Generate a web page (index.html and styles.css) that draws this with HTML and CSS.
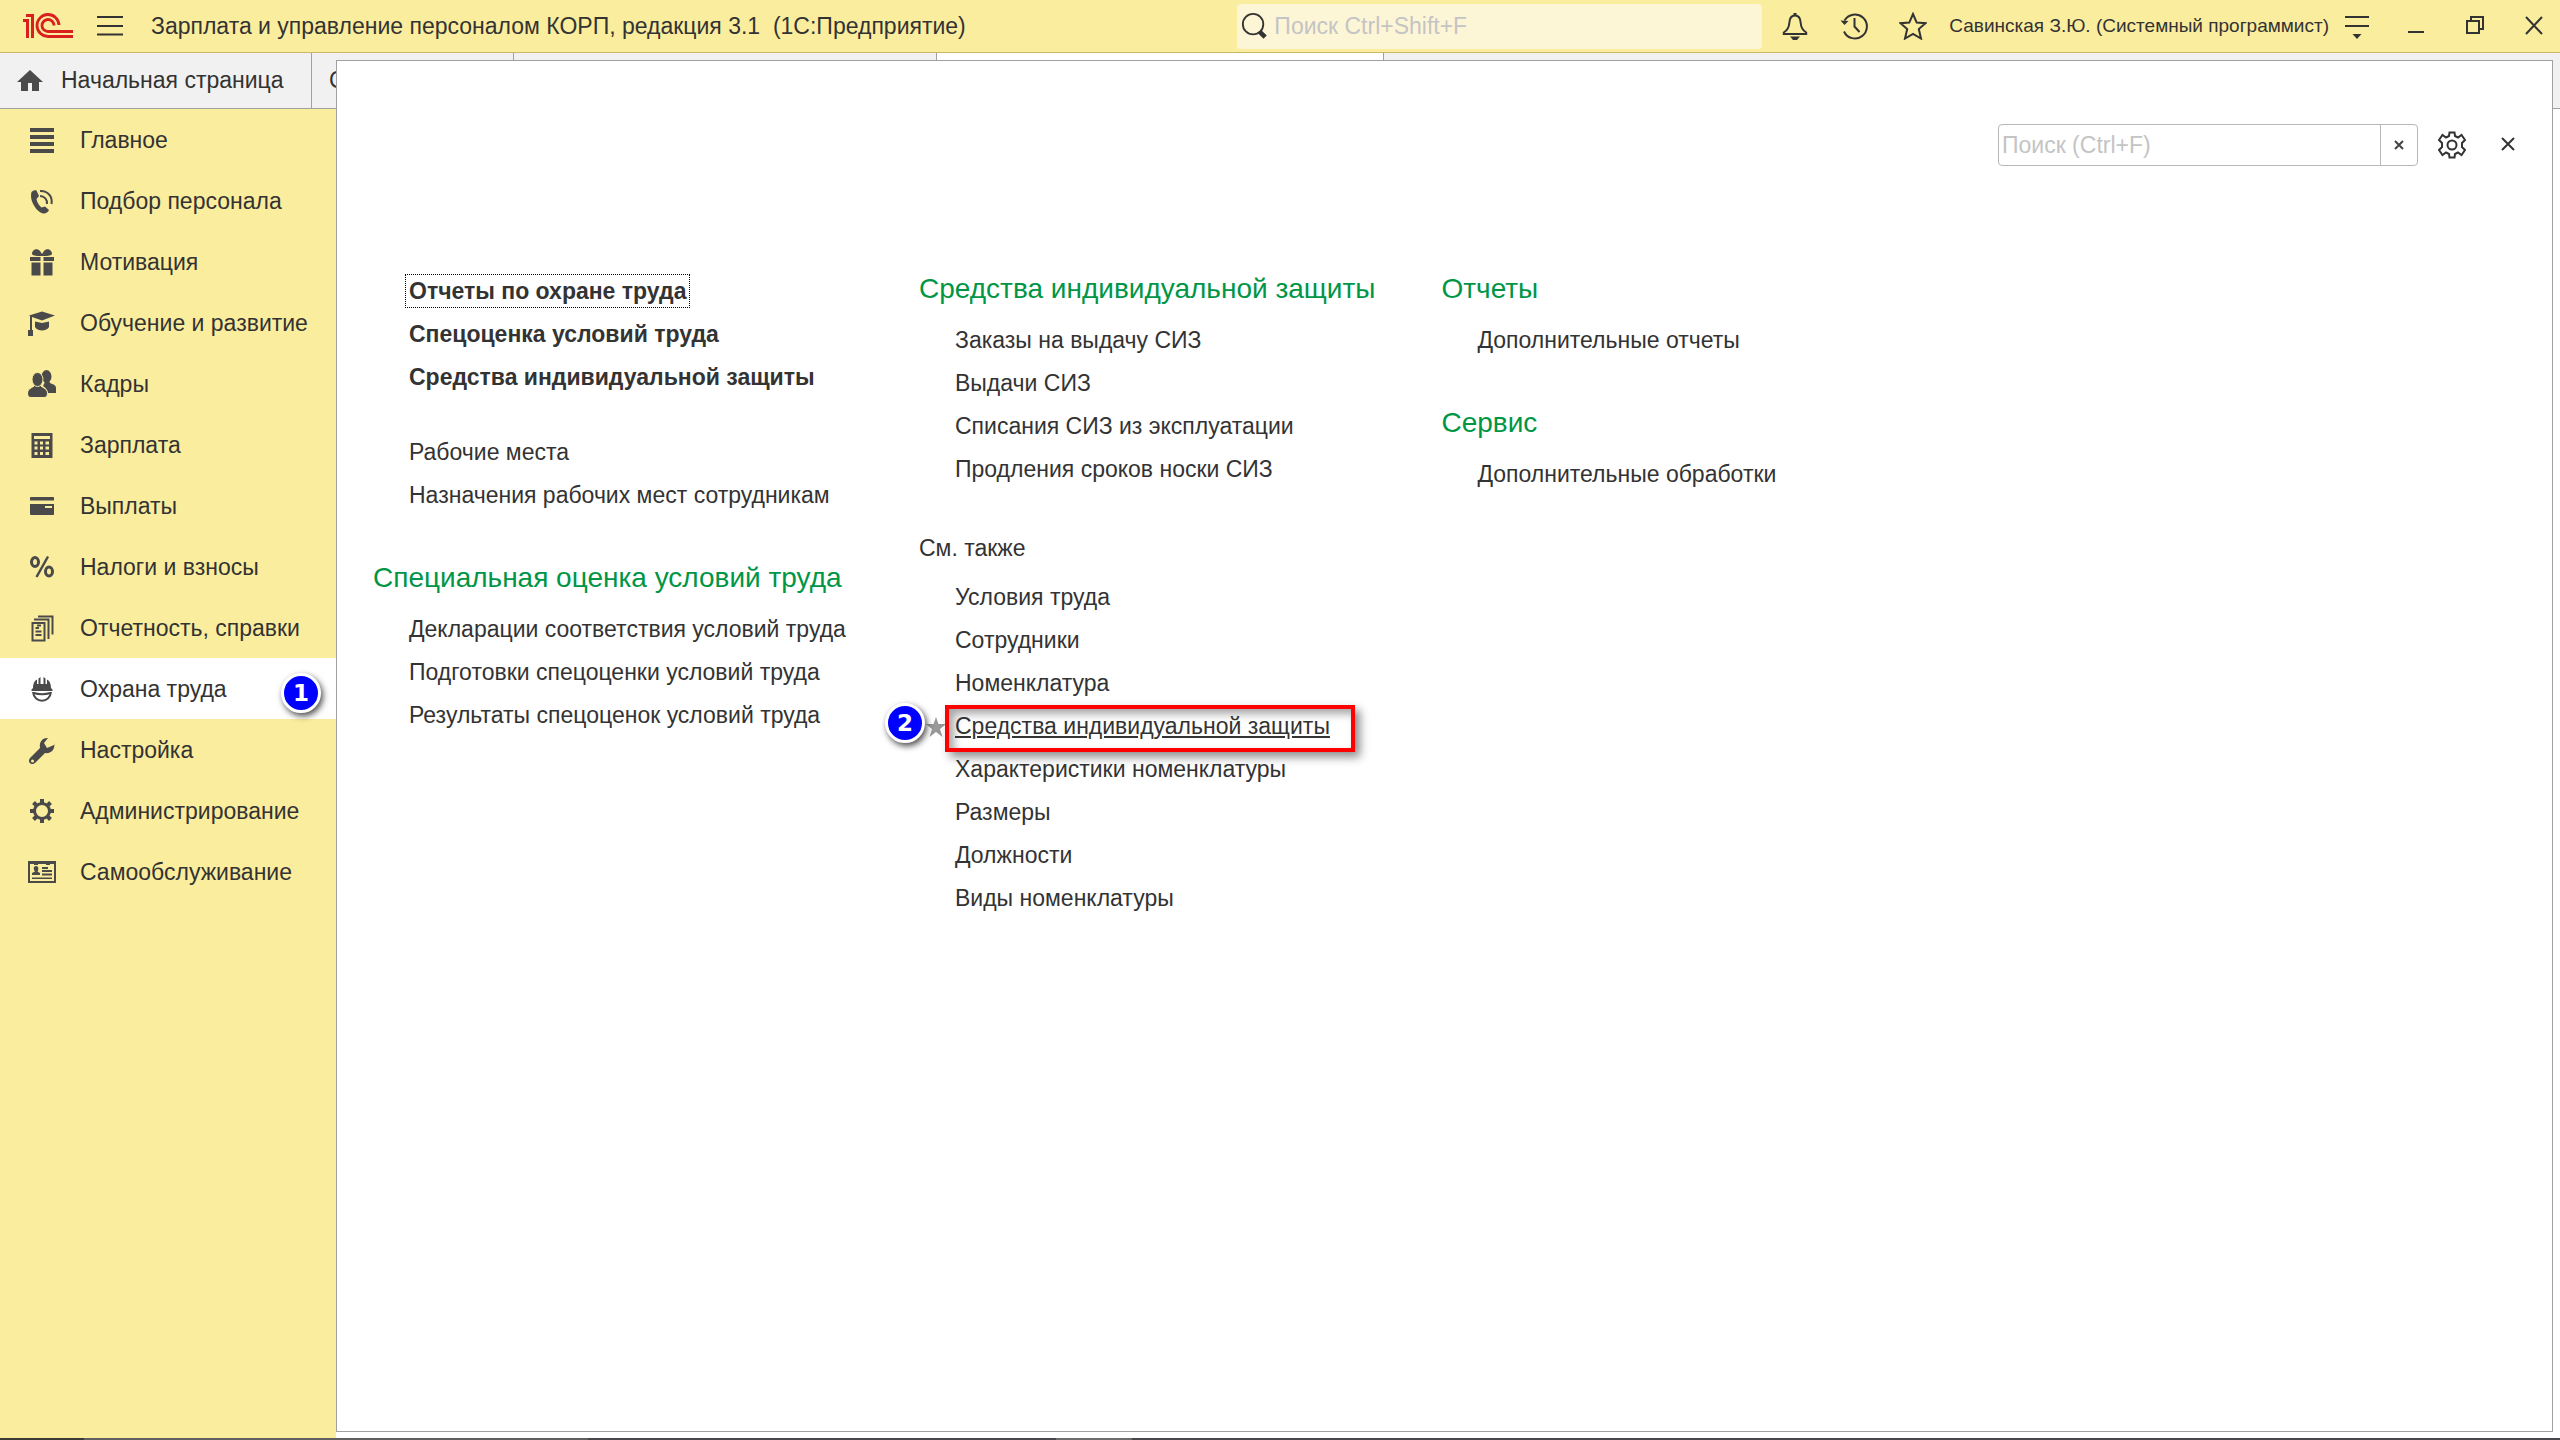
FILE: index.html
```html
<!DOCTYPE html>
<html lang="ru">

<head>
  <meta charset="UTF-8">
  <meta name="viewport" content="width=device-width, initial-scale=1.0">
  <title>Зарплата и управление персоналом КОРП, редакция 3.1</title>
  <link rel="stylesheet" href="styles.css">
</head>

<body>

  <header class="titlebar">
    <svg class="logo" viewBox="0 0 52 26" fill="none" stroke="#d9201f">
      <path stroke-width="3" d="M1 7.500H5.500V25M4 2.500H10.500V25" />
      <path stroke-width="2.800" d="M37 12A11 11 0 1 0 26 23.500H51M32 12.500A6 6 0 1 0 26.500 18.500H51" />
    </svg>
    <button class="icon-btn menu-btn" aria-label="Меню">
      <svg viewBox="0 0 28 28" stroke-width="2"><path d="M1 5H27M1 14H27M1 22.500H27" /></svg>
    </button>
    <h1 class="app-title">Зарплата и управление персоналом КОРП, редакция 3.1&nbsp; (1С:Предприятие)</h1>

    <div class="global-search">
      <svg class="search-icon" viewBox="0 0 28 28" fill="none" stroke="#333">
        <circle cx="13" cy="12" r="11" stroke-width="2" />
        <path stroke-width="5" d="M20.500 20.500L26 26" />
      </svg>
      <input type="text" placeholder="Поиск Ctrl+Shift+F" aria-label="Глобальный поиск">
    </div>

    <div class="tools">
      <button class="icon-btn" aria-label="Уведомления">
        <svg viewBox="0 0 28 28" stroke-width="2">
          <path d="M14 3.500C9.500 3.500 8.500 7 8.300 11C8 16 6 18.500 2.800 20.500V22H25.200V20.500C22 18.500 20 16 19.700 11C19.500 7 18.500 3.500 14 3.500Z" />
          <path d="M14 1V4" stroke-width="3" />
          <path class="solid" d="M9 24.500H19L16 28H12Z" />
        </svg>
      </button>
      <button class="icon-btn" aria-label="История">
        <svg viewBox="0 0 28 28" stroke-width="2">
          <path d="M4.500 8.500A12 12 0 1 1 4 19.500M14.500 6V14.500L19.500 20" />
          <path class="solid" d="M.500 8.500L8.500 9L4.500 13Z" />
        </svg>
      </button>
      <button class="icon-btn" aria-label="Избранное">
        <svg viewBox="0 0 28 28" stroke-width="2">
          <path d="M14 2L17.700 10.600L26.500 11.200L19.800 17L22 26.500L14 21.800L6 26.500L8.200 17L1.500 11.200L10.300 10.600Z" />
        </svg>
      </button>
    </div>
    <span class="user">Савинская З.Ю. (Системный программист)</span>
    <div class="tools">
      <button class="icon-btn" aria-label="Сервис">
        <svg viewBox="0 0 28 28" stroke-width="2">
          <path d="M2 5H26M2 14H26" />
          <path class="solid" d="M9.500 22H18.500L14 27Z" />
        </svg>
      </button>
      <button class="icon-btn" aria-label="Свернуть">
        <svg viewBox="0 0 28 28" stroke-width="2"><path d="M6 20H22" /></svg>
      </button>
      <button class="icon-btn" aria-label="Развернуть">
        <svg viewBox="0 0 28 28" stroke-width="2"><path d="M6 9H18V21H6ZM10 9V5H22V17H18" /></svg>
      </button>
      <button class="icon-btn" aria-label="Закрыть">
        <svg viewBox="0 0 28 28" stroke-width="2"><path d="M6 5L22 22M22 5L6 22" /></svg>
      </button>
    </div>
  </header>

  <div class="workspace">
    <nav class="tabs">
      <a class="tab home" href="#">
        <svg class="home-icon" viewBox="0 0 26 22"><path d="M13 0L26 12H22V21H15V13H11V21H4V12H0Z" /></svg>
        Начальная страница
      </a>
      <a class="tab" href="#">Сотрудники</a>
      <a class="tab wide" href="#"></a>
      <a class="tab wide active" href="#"></a>
    </nav>

    <nav class="sections">
      <a class="section" href="#">
        <svg viewBox="0 0 28 28"><path d="M2 2H26V6H2ZM2 9H26V13H2ZM2 16H26V20H2ZM2 23H26V27H2Z" /></svg>
        Главное
      </a>
      <a class="section" href="#">
        <svg viewBox="0 0 28 28">
          <path d="M3.500 5C5 3.500 7 3 8.500 3.500L11 9L8.500 12C9 15.500 11 18.500 13.500 20.500L17 19.500L21 23C20 25.500 17.500 27 15 26.500C9 25 1 14 3.500 5Z" />
          <path fill="none" stroke="#4a4a4a" stroke-width="2" d="M12 4C19.500 3.500 25 9.500 23.500 17M12 9C16.500 9 19.500 12.500 19 17" />
        </svg>
        Подбор персонала
      </a>
      <a class="section" href="#">
        <svg viewBox="0 0 28 28">
          <path d="M13 8C10 8 5 8 4 6C4 2 9 -.500 12 3L14 6L16 3C19 -.500 24 2 24 6C23 8 18 8 15 8ZM2 9H12.500V13H2ZM15.500 9H26V13H15.500ZM3.500 14.500H12.500V27.500H3.500ZM15.500 14.500H24.500V27.500H15.500Z" />
        </svg>
        Мотивация
      </a>
      <a class="section" href="#">
        <svg viewBox="0 0 28 28">
          <path d="M1 6.500L14 2.500L27 6.500L14 11.500L4 8V21H5V27H0V21H2V7ZM7 12.500L14 14L21 12.500V18C19 22.500 9 22.500 7 18Z" />
        </svg>
        Обучение и развитие
      </a>
      <a class="section" href="#">
        <svg viewBox="0 0 28 28">
          <ellipse cx="18.500" cy="6.500" rx="5" ry="6.500" />
          <path d="M17 12L21 11C22 15 28 13.500 28 18V23H20C19 19 17 17 15 16Z" />
          <g stroke="#fbed9e">
            <path d="M7 14H12C12 18 19.500 17 19.500 23.500C19.500 26 18 27.500 16 27.500H3C1 27.500 -.500 26 -.500 23.500C-.500 17 7 18 7 14Z" />
            <ellipse cx="9.500" cy="9.500" rx="5.500" ry="7" />
          </g>
        </svg>
        Кадры
      </a>
      <a class="section" href="#">
        <svg viewBox="0 0 28 28">
          <path fill-rule="evenodd" d="M3.500 2H24.500V27H3.500ZM6 5V8H22V5ZM6.500 10.500V13.500H9.500V10.500ZM12 10.500V13.500H15V10.500ZM17.500 10.500V13.500H21V10.500ZM6.500 15.500V18.500H9.500V15.500ZM12 15.500V18.500H15V15.500ZM17.500 15.500V18.500H21V15.500ZM6.500 21V24H9.500V21ZM12 21V24H15V21ZM17.500 21V24H21V21Z" />
        </svg>
        Зарплата
      </a>
      <a class="section" href="#">
        <svg viewBox="0 0 28 28">
          <path fill-rule="evenodd" d="M2 6C2 5 2.500 5 3 5H25C26 5 26 5.500 26 6V8.500H2ZM2 12H26V22C26 23 25 23 25 23H3C2 23 2 22 2 22ZM17 14V16H24V14Z" />
        </svg>
        Выплаты
      </a>
      <a class="section" href="#">
        <svg viewBox="0 0 28 28" fill="none" stroke="#4a4a4a">
          <ellipse cx="7" cy="9" rx="3.500" ry="4.500" stroke-width="3" />
          <ellipse cx="21" cy="18.500" rx="3.500" ry="4.500" stroke-width="3" />
          <path stroke-width="2.500" d="M20 3.500L8.500 24" />
        </svg>
        Налоги и взносы
      </a>
      <a class="section" href="#">
        <svg viewBox="0 0 28 28" fill="none" stroke="#4a4a4a" stroke-width="2">
          <path d="M4.500 9H16.500V26.500H4.500ZM6 5.500H20.500V25M10 2.500H24.500V20.500M7.500 14H11M7.500 17.500H13.500M7.500 21H13.500M9 11.500H13" />
        </svg>
        Отчетность, справки
      </a>
      <a class="section current" href="#">
        <svg viewBox="0 0 28 28">
          <path d="M5 13C5 8 7 5.500 9 4.500V9H10.500V3.500L12.500 2V9H15.500V2L17.500 3.500V9H19V4.500C21 5.500 23 8 23 13L24.500 14.500V16H3.500V14.500Z" />
          <path fill="none" stroke="#4a4a4a" stroke-width="2" d="M5 17C6 28.500 22 28.500 23 17M6 18C10 19.500 18 19.500 22 18" />
        </svg>
        Охрана труда
        <span class="marker marker-section">1</span>
      </a>
      <a class="section" href="#">
        <svg viewBox="0 0 28 28">
          <path fill-rule="evenodd" d="M20 2L16 7L19 12L26 9V7C27.500 13 23.500 18 17 17L7 27C3 30 -1 26 2 22L12 12C11 6 14.500 1.500 20 2ZM3 25A1.500 1.500 0 1 0 6 25A1.500 1.500 0 1 0 3 25Z" />
        </svg>
        Настройка
      </a>
      <a class="section" href="#">
        <svg viewBox="0 0 28 28" fill="none" stroke="#4a4a4a">
          <circle cx="14" cy="14" r="7.500" stroke-width="3" />
          <path stroke-width="4" d="M14 2V6M14 22V26M2 14H6M22 14H26M5.500 5.500L8.500 8.500M19.500 19.500L22.500 22.500M5.500 22.500L8.500 19.500M19.500 8.500L22.500 5.500" />
        </svg>
        Администрирование
      </a>
      <a class="section" href="#">
        <svg viewBox="0 0 28 28">
          <path fill-rule="evenodd" d="M0 3H28V25H0ZM2 6V23H26V6H22V7H18V6H10V7H6V6Z" />
          <path d="M4 17V15L7 13.500C5 11 5.500 8 8 8S11 11 9.500 13.500L12 15V17ZM14 9H20V11H14ZM14 12H24V14H14ZM14 15.500H24V17.500H14ZM4 19.500H24V21H4Z" />
        </svg>
        Самообслуживание
      </a>
    </nav>

    <main class="panel">
      <div class="panel-tools">
        <div class="panel-search">
          <input type="text" placeholder="Поиск (Ctrl+F)" aria-label="Поиск">
          <button aria-label="Очистить">
            <svg viewBox="0 0 10 10"><path d="M1 1L9 9M9 1L1 9" /></svg>
          </button>
        </div>
        <button class="icon-btn" aria-label="Настройка панели">
          <svg viewBox="0 0 28 28" stroke-width="2">
            <path d="M11.500 1.500H16.500L17 5L20 6.500L23.500 4L27 9L24 12V16L27 19L23.500 24L20 21.500L17 23L16.500 26.500H11.500L11 23L8 21.500L4.500 24L1 19L4 16V12L1 9L4.500 4L8 6.500L11 5Z" />
            <circle cx="14" cy="14" r="4.500" />
          </svg>
        </button>
        <button class="icon-btn" aria-label="Закрыть панель">
          <svg viewBox="0 0 28 28" stroke-width="2"><path d="M8 7L20 19M20 7L8 19" /></svg>
        </button>
      </div>

      <div class="columns">
        <div class="column column-first">
          <ul class="links important">
            <li><a class="focused" href="#">Отчеты по охране труда</a></li>
            <li><a href="#">Спецоценка условий труда</a></li>
            <li><a href="#">Средства индивидуальной защиты</a></li>
          </ul>
          <ul class="links ordinary">
            <li><a href="#">Рабочие места</a></li>
            <li><a href="#">Назначения рабочих мест сотрудникам</a></li>
          </ul>
          <h2>Специальная оценка условий труда</h2>
          <ul class="links">
            <li><a href="#">Декларации соответствия условий труда</a></li>
            <li><a href="#">Подготовки спецоценки условий труда</a></li>
            <li><a href="#">Результаты спецоценок условий труда</a></li>
          </ul>
        </div>

        <div class="column">
          <h2>Средства индивидуальной защиты</h2>
          <ul class="links">
            <li><a href="#">Заказы на выдачу СИЗ</a></li>
            <li><a href="#">Выдачи СИЗ</a></li>
            <li><a href="#">Списания СИЗ из эксплуатации</a></li>
            <li><a href="#">Продления сроков носки СИЗ</a></li>
          </ul>
          <h3>См. также</h3>
          <ul class="links">
            <li><a href="#">Условия труда</a></li>
            <li><a href="#">Сотрудники</a></li>
            <li><a href="#">Номенклатура</a></li>
            <li class="hovered">
              <svg class="fav" viewBox="0 0 20 20"><path d="M10 0L12.500 7H20L14 12L16.500 20L10 15L3.500 20L6 12L0 7H7.500Z" /></svg>
              <a href="#">Средства индивидуальной защиты</a>
              <span class="frame"></span>
              <span class="marker marker-link">2</span>
            </li>
            <li><a href="#">Характеристики номенклатуры</a></li>
            <li><a href="#">Размеры</a></li>
            <li><a href="#">Должности</a></li>
            <li><a href="#">Виды номенклатуры</a></li>
          </ul>
        </div>

        <div class="column">
          <h2>Отчеты</h2>
          <ul class="links">
            <li><a href="#">Дополнительные отчеты</a></li>
          </ul>
          <h2>Сервис</h2>
          <ul class="links">
            <li><a href="#">Дополнительные обработки</a></li>
          </ul>
        </div>
      </div>
    </main>
  </div>

  <footer class="taskbar"></footer>

</body>

</html>
```

FILE: styles.css
```css
* {
  box-sizing: border-box;
}

body {
  margin: 0;
  height: 100vh;
  display: flex;
  flex-direction: column;
  overflow: hidden;
  background-color: #fff;
  color: #333;
  font-family: "Liberation Sans", Arial, sans-serif;
  font-size: 23px;
}

a {
  color: inherit;
  text-decoration: none;
}

button,
input {
  margin: 0;
  padding: 0;
  border: 0;
  background: none;
  color: inherit;
  font: inherit;
}

input {
  min-width: 0;
  outline: none;
}

input::placeholder {
  color: #c4c4c4;
  opacity: 1;
}

/* Заголовок окна */
.titlebar {
  flex: none;
  display: flex;
  align-items: center;
  height: 53px;
  padding: 0 12px 0 22px;
  background-color: #fbed9e;
  border-bottom: 1px solid #c9b866;
}

.logo {
  width: 52px;
  height: 26px;
}

.icon-btn {
  width: 28px;
  height: 28px;
}

.icon-btn svg {
  display: block;
  width: 28px;
  height: 28px;
  fill: none;
  stroke: #333;
}

.icon-btn .solid {
  fill: #333;
  stroke: none;
}

.menu-btn {
  margin: 0 27px 0 22px;
}

.app-title {
  flex: 1;
  margin: 0;
  font-size: 23px;
  font-weight: normal;
  white-space: nowrap;
}

.global-search {
  display: flex;
  align-items: center;
  gap: 7px;
  width: 525px;
  height: 45px;
  margin-right: 19px;
  padding: 0 4px;
  border-radius: 4px;
  background-color: #fdf6d6;
}

.global-search input {
  flex: 1;
}

.search-icon {
  width: 26px;
  height: 26px;
}

.tools {
  display: flex;
  gap: 31px;
}

.user {
  margin: 0 14px 0 22px;
  font-size: 19px;
  white-space: nowrap;
}

/* Вкладки */
.workspace {
  position: relative;
  flex: 1;
  display: flex;
  flex-direction: column;
}

.tabs {
  display: flex;
  height: 56px;
  background-color: #f1f1f1;
  border-bottom: 1px solid #a0a0a0;
}

.tab {
  display: flex;
  align-items: center;
  width: 202px;
  padding: 0 17px;
  border-right: 1px solid #a0a0a0;
  white-space: nowrap;
}

.tab.home {
  width: 312px;
  gap: 18px;
}

.tab.wide {
  width: 423px;
}

.tab.active {
  width: 447px;
  background-color: #fff;
}

.home-icon {
  width: 26px;
  height: 22px;
  fill: #4a4a4a;
}

/* Разделы */
.sections {
  flex: 1;
  width: 336px;
  background-color: #fbed9e;
}

.section {
  position: relative;
  display: flex;
  align-items: center;
  gap: 24px;
  height: 61px;
  padding: 1px 0 0 28px;
  white-space: nowrap;
}

.section svg {
  width: 28px;
  height: 28px;
  fill: #4a4a4a;
}

.section svg[fill="none"] {
  fill: none;
}

.section.current {
  background-color: #fff;
}

/* Панель функций */
.panel {
  position: absolute;
  top: 7px;
  right: 7px;
  bottom: 6px;
  left: 336px;
  padding: 63px 30px 0 36px;
  border: 1px solid #a0a0a0;
  background-color: #fff;
}

.panel-tools {
  display: flex;
  justify-content: flex-end;
  align-items: center;
  gap: 28px;
}

.panel-search {
  display: flex;
  width: 420px;
  height: 42px;
  margin-right: -8px;
  border: 1px solid #b8b8b8;
  border-radius: 4px;
}

.panel-search input {
  flex: 1;
  padding-left: 3px;
}

.panel-search button {
  width: 37px;
  border-left: 1px solid #b8b8b8;
}

.panel-search svg {
  display: block;
  width: 10px;
  height: 10px;
  margin: 0 auto;
  stroke: #444;
  stroke-width: 2;
}

.columns {
  display: flex;
  gap: 66px;
  margin-top: 102px;
}

.column-first {
  width: 480px;
}

.column h2,
.column h3 {
  margin: 40px 0 10px;
  font-size: 28px;
  font-weight: normal;
  line-height: 41px;
  color: #009646;
  white-space: nowrap;
}

.column h3 {
  margin: 36px 0 6px;
  font-size: 23px;
  line-height: 43px;
  color: #333;
}

.column h2:first-child {
  margin-top: 0;
}

.links {
  margin: 0;
  padding: 0 0 0 36px;
  list-style: none;
  line-height: 43px;
  white-space: nowrap;
}

.links li {
  position: relative;
  width: max-content;
}

.links.important {
  padding-top: 2px;
  font-weight: bold;
}

.links.ordinary {
  margin-top: 32px;
}

.focused {
  padding: 3px;
  margin-left: -3px;
  outline: 1px dotted #000;
}

.hovered a {
  text-decoration: underline;
}

.fav {
  position: absolute;
  top: 12px;
  left: -29px;
  width: 20px;
  height: 20px;
  fill: #999;
}

/* Выноски */
.frame {
  position: absolute;
  top: 0;
  right: -25px;
  bottom: -4px;
  left: -10px;
  border: 4px solid #f00;
  box-shadow: 5px 5px 9px rgba(0, 0, 0, .45), inset 5px 5px 9px rgba(0, 0, 0, .35);
}

.marker {
  position: absolute;
  width: 40px;
  height: 40px;
  border: 3px solid #fff;
  border-radius: 50%;
  background-color: #00f;
  box-shadow: 2px 3px 6px rgba(0, 0, 0, .7);
  color: #fff;
  font: bold 23px/34px "DejaVu Sans", sans-serif;
  text-align: center;
}

.marker-section {
  top: 15px;
  right: 15px;
}

.marker-link {
  top: -2px;
  left: -70px;
}

/* Край панели задач */
.taskbar {
  flex: none;
  height: 2px;
  background: linear-gradient(90deg, #3c3c32 84px, #606060 84px 588px, #48484c 588px 1056px, #6c6c6e 1056px 1132px, #48484c 1132px);
}
```
